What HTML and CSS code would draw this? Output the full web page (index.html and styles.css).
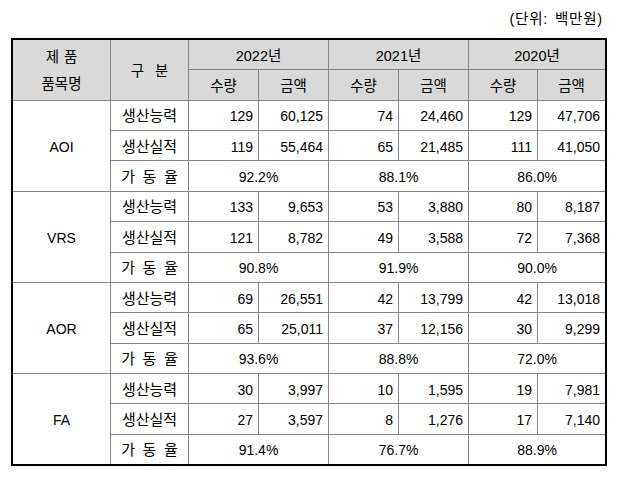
FILE: index.html
```html
<!DOCTYPE html>
<html lang="ko">
<head>
<meta charset="utf-8">
<title>생산능력 및 생산실적</title>
<link rel="stylesheet" href="styles.css">
</head>
<body>
<div class="page">
  <div class="unit">(단위: 백만원)</div>
  <div class="frame">
    <table class="cap">
      <colgroup>
        <col class="c-prod"><col class="c-kind">
        <col class="c-70"><col class="c-70"><col class="c-70"><col class="c-70"><col class="c-69"><col class="c-68">
      </colgroup>
      <thead>
        <tr>
          <th rowspan="2" class="two">제 품<br>품목명</th>
          <th rowspan="2" class="wide">구 분</th>
          <th colspan="2">2022년</th>
          <th colspan="2">2021년</th>
          <th colspan="2">2020년</th>
        </tr>
        <tr>
          <th>수량</th><th>금액</th>
          <th>수량</th><th>금액</th>
          <th>수량</th><th>금액</th>
        </tr>
      </thead>
      <tbody>
        <tr>
          <td rowspan="3" class="prod">AOI</td>
          <td class="kind">생산능력</td>
          <td class="num">129</td><td class="num">60,125</td>
          <td class="num">74</td><td class="num">24,460</td>
          <td class="num">129</td><td class="num">47,706</td>
        </tr>
        <tr>
          <td class="kind">생산실적</td>
          <td class="num">119</td><td class="num">55,464</td>
          <td class="num">65</td><td class="num">21,485</td>
          <td class="num">111</td><td class="num">41,050</td>
        </tr>
        <tr>
          <td class="kind rate">가 동 율</td>
          <td colspan="2" class="pct">92.2%</td>
          <td colspan="2" class="pct">88.1%</td>
          <td colspan="2" class="pct">86.0%</td>
        </tr>

        <tr>
          <td rowspan="3" class="prod">VRS</td>
          <td class="kind">생산능력</td>
          <td class="num">133</td><td class="num">9,653</td>
          <td class="num">53</td><td class="num">3,880</td>
          <td class="num">80</td><td class="num">8,187</td>
        </tr>
        <tr>
          <td class="kind">생산실적</td>
          <td class="num">121</td><td class="num">8,782</td>
          <td class="num">49</td><td class="num">3,588</td>
          <td class="num">72</td><td class="num">7,368</td>
        </tr>
        <tr>
          <td class="kind rate">가 동 율</td>
          <td colspan="2" class="pct">90.8%</td>
          <td colspan="2" class="pct">91.9%</td>
          <td colspan="2" class="pct">90.0%</td>
        </tr>

        <tr>
          <td rowspan="3" class="prod">AOR</td>
          <td class="kind">생산능력</td>
          <td class="num">69</td><td class="num">26,551</td>
          <td class="num">42</td><td class="num">13,799</td>
          <td class="num">42</td><td class="num">13,018</td>
        </tr>
        <tr>
          <td class="kind">생산실적</td>
          <td class="num">65</td><td class="num">25,011</td>
          <td class="num">37</td><td class="num">12,156</td>
          <td class="num">30</td><td class="num">9,299</td>
        </tr>
        <tr>
          <td class="kind rate">가 동 율</td>
          <td colspan="2" class="pct">93.6%</td>
          <td colspan="2" class="pct">88.8%</td>
          <td colspan="2" class="pct">72.0%</td>
        </tr>

        <tr>
          <td rowspan="3" class="prod">FA</td>
          <td class="kind">생산능력</td>
          <td class="num">30</td><td class="num">3,997</td>
          <td class="num">10</td><td class="num">1,595</td>
          <td class="num">19</td><td class="num">7,981</td>
        </tr>
        <tr>
          <td class="kind">생산실적</td>
          <td class="num">27</td><td class="num">3,597</td>
          <td class="num">8</td><td class="num">1,276</td>
          <td class="num">17</td><td class="num">7,140</td>
        </tr>
        <tr>
          <td class="kind rate">가 동 율</td>
          <td colspan="2" class="pct">91.4%</td>
          <td colspan="2" class="pct">76.7%</td>
          <td colspan="2" class="pct">88.9%</td>
        </tr>
      </tbody>
    </table>
  </div>
</div>
</body>
</html>
```
FILE: styles.css
```css
html, body {
  margin: 0;
  padding: 0;
  background: #ffffff;
}

body {
  font-family: "Liberation Sans", "Noto Sans CJK KR", sans-serif;
  font-size: 14px;
  color: #000000;
}

.page {
  padding: 10px 0 0 11px;
  width: 596px;
}

.unit {
  height: 18px;
  line-height: 18px;
  text-align: right;
  padding-right: 4px;
  margin-bottom: 10px;
  font-size: 14.5px;
  letter-spacing: 0.8px;
  word-spacing: 2px;
}

.frame {
  width: 596px;
  box-sizing: border-box;
  border: 2px solid #000000;
  overflow: hidden;
}

.cap {
  table-layout: fixed;
  border-collapse: separate;
  border-spacing: 0;
  width: 593px;
  margin: -1px 0 0 -1px;
}

.c-prod { width: 98px; }
.c-kind { width: 78px; }
.c-70 { width: 70px; }
.c-69 { width: 69px; }
.c-68 { width: 68px; }

.cap tr {
  height: 30.36px;
}

.cap th,
.cap td {
  border-left: 1px solid #858585;
  border-top: 1px solid #858585;
  padding: 2px 0 0 0;
  line-height: 16px;
  font-weight: normal;
  text-align: center;
  white-space: nowrap;
  box-sizing: border-box;
}

.cap th {
  background: #d9d9d9;
  font-size: 14.5px;
}

.cap th.two {
  line-height: 27px;
  word-spacing: 1px;
}

.cap th.wide {
  word-spacing: 7px;
}

.cap td.kind {
  font-size: 15px;
}

.cap td.rate {
  word-spacing: 3.5px;
}

.cap td.num {
  text-align: right;
  padding-right: 5px;
}
```
